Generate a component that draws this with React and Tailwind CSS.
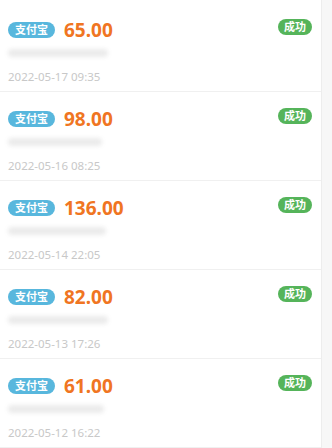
import React from 'react'

const rows = [
  { amount: '65.00', time: '2022-05-17 09:35', blur: 'w-[100px]' },
  { amount: '98.00', time: '2022-05-16 08:25', blur: 'w-[94px]' },
  { amount: '136.00', time: '2022-05-14 22:05', blur: 'w-[98px]' },
  { amount: '82.00', time: '2022-05-13 17:26', blur: 'w-[100px]' },
  { amount: '61.00', time: '2022-05-12 16:22', blur: 'w-[96px]' },
]

function Row({ amount, time, blur }) {
  return (
    <div className="h-[89px] border-b border-[#f0f0f0] pl-2 pr-2 relative">
      <div className="flex items-center pt-[16px]">
        <span className="h-[16px] px-[7px] rounded-full bg-[#58b7dd] text-white text-[11px] leading-[16px] font-bold">
          支付宝
        </span>
        <span className="ml-[9px] text-[19px] leading-[22px] font-bold text-[#f07522]">
          {amount}
        </span>
      </div>
      <span className="absolute right-[9px] top-[16px] h-[16px] px-[6px] rounded-full bg-[#55b45a] text-white text-[11px] leading-[16px] font-bold">
        成功
      </span>
      <div className={`mt-[8px] h-[8px] ${blur} rounded-full bg-[#ebebeb] blur-[2px]`} />
      <div className="mt-[13px] text-[11.5px] leading-[14px] text-[#c8c8c8]">{time}</div>
    </div>
  )
}

export default function App() {
  return (
    <div
      className="w-[332px] h-[448px] overflow-hidden bg-[#f7f7f7] flex"
      style={{ fontFamily: '"Noto Sans", "Noto Sans CJK SC", sans-serif' }}
    >
      <div className="w-[322px] bg-white border-r border-[#ededed] pt-[3px]">
        {rows.map((r) => (
          <Row key={r.time} {...r} />
        ))}
      </div>
    </div>
  )
}
